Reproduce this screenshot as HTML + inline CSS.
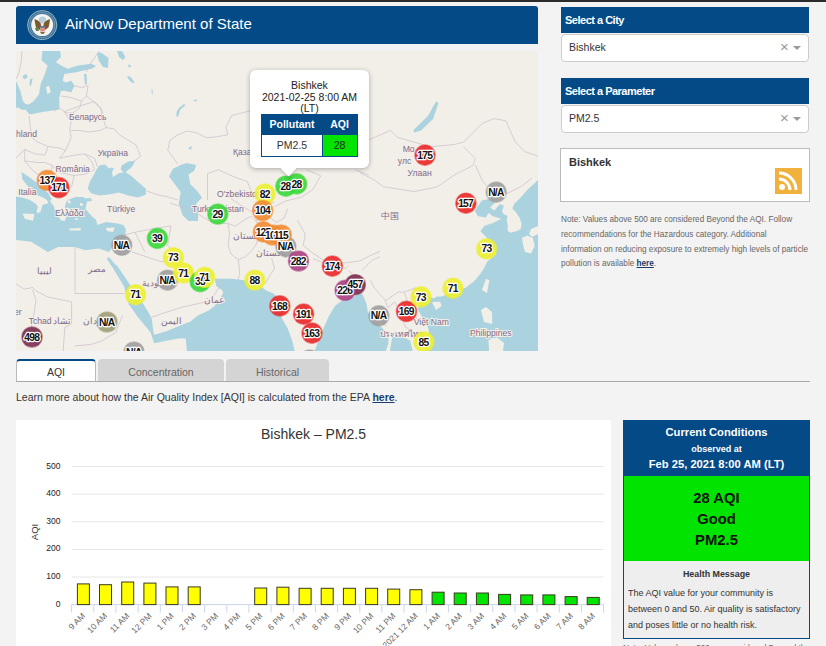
<!DOCTYPE html>
<html><head><meta charset="utf-8">
<style>
*{box-sizing:border-box;margin:0;padding:0}
html,body{width:826px;height:646px;overflow:hidden;background:#f3f3f3;font-family:"Liberation Sans",sans-serif;color:#333}
.abs{position:absolute}
</style></head><body>
<div class="abs" style="left:0;top:0;width:826px;height:2px;background:#2b2b2b"></div>
<!-- header -->
<div class="abs" style="left:16px;top:6px;width:522px;height:38px;background:#034a87;border-radius:3px 3px 0 0"></div>
<svg class="abs" style="left:27px;top:10px" width="31" height="31" viewBox="0 0 31 31">
<circle cx="15.2" cy="15.1" r="14.6" fill="#3f6f98" stroke="#8fb8bf" stroke-width="1"/>
<circle cx="15.2" cy="15.1" r="12.6" fill="none" stroke="#7aa3bd" stroke-width="0.8"/>
<circle cx="15.2" cy="15.1" r="11" fill="#f3f4f1"/>
<circle cx="15.5" cy="10" r="3.6" fill="#b9cfdc"/>
<path d="M7.5,9 L11,10.5 L13.5,13 L14.5,17 L12.5,20 L9,17.5 L8,13 Z" fill="#7b5b2c"/>
<path d="M23,9 L19.5,10.5 L17,13 L16,17 L18,20 L21.5,17.5 L22.5,13 Z" fill="#7b5b2c"/>
<path d="M8,18 L11,17 L12,21 L9,21 Z" fill="#5d8a4a"/>
<rect x="13.2" y="16" width="4.6" height="5.5" fill="#d98a8a"/>
<rect x="13.2" y="16" width="4.6" height="1.6" fill="#5a6fa0"/>
<path d="M13,22 L18,22 L16.5,24 L14.5,24 Z" fill="#8a6a3a"/>
</svg>
<div class="abs" style="left:65px;top:15px;font-size:15px;color:#fff;white-space:nowrap">AirNow Department of State</div>
<svg width="522" height="300" viewBox="16 51 522 300" style="position:absolute;left:16px;top:51px;display:block">
<rect x="16" y="51" width="522" height="300" fill="#f2efe9"/>
<polygon points="42.4,51 60.2,51 61,57 55.9,62 61,65.4 67.8,68.8 78,65.4 91.5,63.7 96,66 94.9,67.1 91.5,68.8 76.3,72.2 64.4,73.9 62.7,80.7 66.1,82.4 71.2,80.7 74.6,85.8 71.2,92.5 64.4,90.8 61,90.8 59.3,97.6 59.3,109.5 42.4,112 29.7,114.6 25.4,109.5 22,110 18.6,107.8 16,107.8 16,80.7 20.3,90.8 22.9,101 25.4,104 28.8,104.4 33.9,101 39,94.2 40.7,84.1 44.9,73.9 47.5,65.4 41.5,60.3" fill="#aad3df"/>
<polygon points="97,53 101,52.5 108.5,58 108,68 103,67 98.5,60" fill="#aad3df"/>
<polygon points="84,74 86.5,74 87,84 85,85" fill="#aad3df"/>
<polygon points="99.4,165.5 105.2,164.5 109,168.4 112,167.4 113.9,168.4 112,172.3 112.9,177.1 118.7,173.2 123.6,172.3 120.7,169.4 121.6,165.5 128.4,161.6 135.2,160.7 132.3,166.5 125.5,172.3 130.4,175.2 138.1,182 145.9,188.7 145.9,194.6 138.1,197.5 128.4,195.5 118.7,192.6 109,194.6 99.4,195.5 91.6,193.6 87.7,188.7 89.7,182 93.6,175.2 96.5,169.4" fill="#aad3df"/>
<polygon points="84,198.5 91,198 92,201 85,201.5" fill="#aad3df"/>
<polygon points="186.5,163 196.2,164.9 194.2,170.7 188.4,174.6 190.4,184.2 198.1,192 202,197.8 196.2,203.6 198.1,215.2 198.1,221 188.4,221 182.6,215.2 178.7,203.6 180.7,192 174.9,184.2 169,176.5 172.9,168.7 180.7,164.9" fill="#aad3df"/>
<polygon points="16,195 22.5,197 30,199 37,197.5 41,201 46.5,203.5 48.5,199 54,206.7 56.1,214.3 61.5,220.8 64.8,220.8 67,215.4 64.8,206.7 67,200.2 75.6,196.9 83.2,196.9 87.5,200.2 85.4,208.8 91.9,216.4 96,219.7 97.4,224.9 106,222 117.7,223.4 123.5,224.9 126,230 125,236 122.5,240 114,245.2 108.9,252 98.7,248.6 85.2,250.3 75,246.9 58,246.9 47.9,252 31,241.8 16,240" fill="#aad3df"/>
<polygon points="21.4,171.9 27.9,176.3 35.5,181.7 43.1,188.2 48.5,193.6 51.8,199.5 47,203 43.1,201.2 37.7,196.9 33.4,192.5 26.8,185 22.5,179.5" fill="#aad3df"/>
<polygon points="107.9,257.3 110,258 115,264.5 116.5,265 122.5,273.6 129,283.3 134.5,293 142.6,303 148.2,311.8 151.8,319 153,328.7 154.2,334.8 166.3,331.2 178.4,326.3 190.5,321.5 197.8,315.4 208.7,310.6 214.7,305.7 219.6,299.7 223.2,292.4 222.1,290.3 216.3,286 214.9,278.7 223.6,278.7 232.3,278.7 243.9,280.2 258.5,284.5 265.7,290.3 273,293.2 278.8,299 281.7,307.8 281.7,318 287.5,328.1 291.9,339.7 294.8,351 186.9,351 185.7,338.4 178.4,338.4 166.3,340.8 154.2,343.3 151.8,336 150.6,332.4 144.5,325.1 137.3,316.6 130,305.7 129,305 124,286.6 119,277.9 113,268.2 107,259" fill="#aad3df"/>
<polygon points="314.6,351 321.4,333 328.1,317.8 334.9,305.9 341.7,300.8 348.5,299.2 355.3,295.8 361.8,293.3 364.2,298.2 366.6,304.2 367.8,311.5 372,320 380,326 384.8,330.8 388.4,338.1 388.4,343 386,351" fill="#aad3df"/>
<polygon points="392,338 396.9,335.7 403,336.9 410.2,340.5 412.6,351 390,351" fill="#aad3df"/>
<polygon points="538,180 527.2,190 520.7,197.4 514.2,203.9 512.3,208.6 516,212.3 519.7,217.9 521.6,223.5 520.7,229 517,230.9 510.4,232.8 507.7,230.9 507.7,225.3 506.7,219.7 507.7,216 503.9,214.2 502,211.4 503.9,205.8 500,204 494.3,210.4 490,213 492,216 501.3,218.7 492.9,222.9 484.6,225.7 480.4,231.3 487.4,238.2 493,245.2 496.5,253.7 487.2,261.7 484,268.2 479.6,274.7 474.2,281.2 465.5,287.7 453,292 441.7,296.4 436.3,296.4 434.1,298.5 429.8,296.4 425,300 420,305 417.5,309 424.7,321.2 428.4,328.4 429.6,336.9 427,345 424.7,351 538,351" fill="#aad3df"/>
<polygon points="481.8,200.6 487.4,199.2 495.7,202 490.1,207.6 494.3,210.4 492,214 488,213.5 486,217.4 477.6,216 474.8,210.4" fill="#aad3df"/>
<path d="M117,51 L122,51 L125.4,57 L123,60 L119,57 Z" fill="#aad3df"/>
<path d="M436,101.5 L438.5,103 L433,119 L421,130.5 L414,132.5 L413.5,130 L428,116 Z" fill="#aad3df"/>
<path d="M22.5,76 L26,74 L28,77 L24,79.5 Z" fill="#aad3df"/>
<path d="M30,79 L32.7,78.6 L31,86 L29.5,85 Z" fill="#aad3df"/>
<path d="M188,148 L192,146 L191,150 Z" fill="#aad3df"/>
<path d="M127,76 L130,76.5 L133,80 L134.5,83 L132.5,83 L129,80 Z" fill="#aad3df"/>
<path d="M128,64.5 L130.5,65 L131,67.5 L128.5,67 Z" fill="#aad3df"/>
<path d="M184,104 L185.5,105 L180,110 L178.5,116 L176.5,117 L176.5,112 L179,108 Z" fill="#aad3df"/>
<path d="M193,100 L197,99.5 L196,102 Z" fill="#aad3df"/>
<path d="M151.5,89 L152.5,89 L152.8,94 L151.8,94 Z" fill="#aad3df"/>
<polygon points="22.5,213.5 34.4,214 33,220.7 25,219" fill="#f2efe9"/>
<polygon points="46,87 49,85.8 50.8,92 47.5,94.2" fill="#f2efe9"/>
<polygon points="28,194 36,195 42,197 47,200 48.5,203.5 45,204 42.5,205 41.5,208 41,211 38,213.5 36.5,211 38,207 36,204 30,200 22,197.5 16,196.5 16,194" fill="#f2efe9"/>
<polygon points="67,200 70,200.5 71,203 68.5,203.5" fill="#f2efe9"/>
<polygon points="66.5,207 70,209 71,211.5 67.5,210" fill="#f2efe9"/>
<polygon points="72,213 75,213.5 74,216 71.5,215" fill="#f2efe9"/>
<polygon points="77,209 80,210 79,212 76.5,211.5" fill="#f2efe9"/>
<polygon points="80,203 83,203.5 82.5,206 80,205.5" fill="#f2efe9"/>
<polygon points="75,218 78,218.5 77.5,220 75,219.8" fill="#f2efe9"/>
<polygon points="69.1,228.4 81,228 80.5,230.5 70,230.5" fill="#f2efe9"/>
<polygon points="106,228 114.8,227.5 113,232 107,231" fill="#f2efe9"/>
<polygon points="522,238 527,235.5 533,238 534.7,246 531,253.6 525,252 523,245" fill="#f2efe9"/>
<polygon points="538,226 531,229 529,234 532,236.9 538,234" fill="#f2efe9"/>
<polygon points="432,302 440,301.8 441.7,306 436,310" fill="#f2efe9"/>
<polygon points="486,279 489.4,280 487,293 482,290" fill="#f2efe9"/>
<polygon points="481,310 486,307 492,312 492.3,324 484,322" fill="#f2efe9"/>
<polygon points="488.5,340 497,337.5 504,343 503,351 489,351" fill="#f2efe9"/>
<g fill="none" stroke="#cdbfcc" stroke-width="0.75">
<path d="M29.1,116 L30.5,129 L33.4,139.2 L37.8,142.1 L48,146.5 L59.6,148 L65.4,150.8"/>
<path d="M64,111.6 L71.2,121.8 L69.8,129 L71.2,137.8 L65.4,150.8"/>
<path d="M64,111.6 L80,105.8 L94.5,101.5 L100.3,107.3 L103.2,118.9 L106.1,127.6 L100.3,130.5 L88.6,132 L80,130.5 L71.2,130.5"/>
<path d="M99.2,51 L88.1,67.1 L86.4,72.2"/>
<path d="M88.1,85.8 L86.4,96 L94.9,102.7 L101.7,109.5 L103.4,119.7"/>
<path d="M74.6,85.8 L81.4,87.5 L88.1,85.8"/>
<path d="M61,96 L71.2,97.6 L81.4,101 L86.4,96"/>
<path d="M81.4,101 L79.7,107.8 L72.9,112.9 L66.1,112.9 L59.3,107.8 L54.2,111.2"/>
<path d="M106.1,127.6 L114.8,129 L117.7,133.4 L126.4,139.2 L136,145 L140.7,156.2 L132.9,162"/>
<path d="M48,146.5 L45,155.2 L34.9,153.8 L24.7,149.4 L16,158.1"/>
<path d="M65.4,150.8 L59.6,158.1 L74.1,155.2 L84.3,153.8 L91.5,161 L94.5,169.7 L85.7,174.1 L74.1,175.5 L59.6,172.6 L52.3,165.4 L45,162.5 L37.8,162.5 L24.7,161 L24.7,149.4"/>
<path d="M84.3,153.8 L94.5,158.1 L97.4,166.8"/>
<path d="M24.7,161 L32,169.7 L40,176 L48,182"/>
<path d="M74.1,175.5 L72,185 L68,192 L60,196"/>
<path d="M52.3,165.4 L50,178 L55,188 L58,196"/>
<path d="M22,51 L21.2,62 L18.6,73.9 L16,79"/>
<path d="M177.5,163.9 L173.6,158.1 L167.8,150.4 L169.7,140.7 L177.5,134.9 L187.2,131 L196.9,132.9 L206.5,137.8 L216.2,136.8 L227.8,134.9 L225.9,127.1 L231.7,115.5 L247.2,111.6 L255,109.7"/>
<path d="M207.5,200 L207.5,173.6 L218.2,169.7 L235.6,177.5 L247.2,181.4 L251.1,191"/>
<path d="M146.5,191 L158.1,194.9 L167.8,196.9 L178,200"/>
<path d="M307.2,170 L320.7,175.8 L313,189.4 L301.4,197.1 L285.9,201 L274.2,206.8"/>
<path d="M252.9,193.2 L260.7,199 L274.2,203"/>
<path d="M199,214.7 L213.6,223.4 L228.1,223.4 L229.6,233.6 L228.1,245.2 L231,254 L238.3,259.7 L239.7,271.4 L238.3,280"/>
<path d="M228.1,223.4 L235.4,226.3 L245.5,219 L251.4,216.2 L255.7,220.5 L268.4,216.5 L276.2,222.3 L283.9,218.4 L287.8,208.7"/>
<path d="M255.7,220.5 L262,232 L258,240 L255.7,245.2 L251.4,251 L245.5,256.8 L238.3,259.7"/>
<path d="M231,198.7 L239.7,204.5 L251.4,211.8 L260.7,199"/>
<path d="M271.7,258.3 L274.6,268.5 L268.8,277.2 L265.4,283.9"/>
<path d="M170,203 L185,208 L199,214.7"/>
<path d="M297.5,220.4 L305.2,233.9 L303.3,245.5 L313,253.3 L324.6,261 L344,263 L359.5,261 L371.1,255.2 L380,251.4"/>
<path d="M355.6,170 L368.8,175"/>
<path d="M360,172.7 L374.1,179.8 L383.5,186.8 L414.1,191.5 L437.6,186.8 L454.1,175.1 L472.9,165.6 L475.3,158.6 L463.5,146.8"/>
<path d="M368.8,139.8 L390.6,130.4 L397.6,137.4 L414.1,142.1 L430.6,146.8 L454.1,144.5 L463.5,142.1 L482.4,123.3 L494.1,118.6 L505.9,120.9 L515.3,142.1 L524.7,151.5 L538,156.2"/>
<path d="M475.3,165 L482,180 L490,190 L497,198 L510,192 L522,186 L532,178"/>
<path d="M121.9,235.6 L135,232.3 L151.3,229 L171,225.8"/>
<path d="M135,232.3 L144.8,251.9"/>
<path d="M131.7,251.9 L161.1,261.7 L177.5,261.7"/>
<path d="M171,225.8 L167.6,245.4 L180.7,258.5"/>
<path d="M75,247 L75,293.5 L124.2,293.5"/>
<path d="M47.9,297 L71.6,301.9 L71.6,323.9 L64.8,327.3 L63.2,351"/>
<path d="M14,282.5 L24.2,289.2 L32.6,287.5 L36,291 L47.9,297"/>
<path d="M32.6,290 L36,300.2 L32.6,322.2 L27.6,340.8"/>
<path d="M151.3,317.3 L180.7,307.5 L210.1,301 L223.2,281.3"/>
<path d="M122.5,315.4 L115.7,332.4 L102.1,340.8 L92,344.2 L75,346"/>
<path d="M312.9,258.5 L324.7,263.6 L345.1,268.6 L348.5,265.3"/>
<path d="M348.5,270.3 L358.6,280.5 L362,292.4"/>
<path d="M362,270.3 L372.2,260.2 L380,256.8"/>
<path d="M370.3,280 L373.9,287.3 L380,294.5 L386,300.6 L390.8,297 L398.1,292.1 L404.2,292.1 L407.8,301.8 L412.6,311.5 L418.7,321.2 L424.7,327.2"/>
<path d="M384.8,300.6 L388.4,307.8 L394.5,301.8 L398.1,307.8 L405.4,327.2 L412.6,330.8"/>
<path d="M380,318.7 L386,326"/>
<path d="M404.2,292.1 L415,288 L425,290"/>
</g>
<g font-family="Liberation Sans" font-size="8.6" letter-spacing="0" fill="#806a88">
<text x="69" y="120" stroke="#f2efe9" stroke-width="2" paint-order="stroke">Беларусь</text>
<text x="16" y="137" stroke="#f2efe9" stroke-width="2" paint-order="stroke">hland</text>
<text x="97.8" y="156" stroke="#f2efe9" stroke-width="2" paint-order="stroke">Україна</text>
<text x="55.5" y="171.5" stroke="#f2efe9" stroke-width="2" paint-order="stroke">România</text>
<text x="18.3" y="195" stroke="#f2efe9" stroke-width="2" paint-order="stroke">Italia</text>
<text x="54.9" y="215.5" stroke="#f2efe9" stroke-width="2" paint-order="stroke">Ελλάδα</text>
<text x="107" y="212" stroke="#f2efe9" stroke-width="2" paint-order="stroke">Türkiye</text>
<text x="233" y="155" stroke="#f2efe9" stroke-width="2" paint-order="stroke">Қаза</text>
<text x="217" y="197" stroke="#f2efe9" stroke-width="2" paint-order="stroke">O'zbekiston</text>
<text x="192" y="212" stroke="#f2efe9" stroke-width="2" paint-order="stroke">Turkmenistan</text>
<text x="380.5" y="219" stroke="#f2efe9" stroke-width="2" paint-order="stroke">中国</text>
<text x="402.7" y="151.6" stroke="#f2efe9" stroke-width="2" paint-order="stroke">Mo</text>
<text x="397.8" y="164" stroke="#f2efe9" stroke-width="2" paint-order="stroke">улс</text>
<text x="407.5" y="175.8" stroke="#f2efe9" stroke-width="2" paint-order="stroke">Улаан</text>
<text x="36.9" y="274" stroke="#f2efe9" stroke-width="2" paint-order="stroke">ليبيا</text>
<text x="87.5" y="272" stroke="#f2efe9" stroke-width="2" paint-order="stroke">مصر</text>
<text x="141.5" y="286" stroke="#f2efe9" stroke-width="2" paint-order="stroke">السعودية</text>
<text x="233" y="239" stroke="#f2efe9" stroke-width="2" paint-order="stroke">افغانستان</text>
<text x="256" y="256" stroke="#f2efe9" stroke-width="2" paint-order="stroke">پاکستان</text>
<text x="203.6" y="303" stroke="#f2efe9" stroke-width="2" paint-order="stroke">عمان</text>
<text x="161" y="324" stroke="#f2efe9" stroke-width="2" paint-order="stroke">اليمن</text>
<text x="82.6" y="324" stroke="#f2efe9" stroke-width="2" paint-order="stroke">السودان</text>
<text x="28.7" y="324" stroke="#f2efe9" stroke-width="2" paint-order="stroke">Tchad</text>
<text x="53" y="324" stroke="#f2efe9" stroke-width="2" paint-order="stroke">تشاد</text>
<text x="14" y="315" stroke="#f2efe9" stroke-width="2" paint-order="stroke">er</text>
<text x="413.8" y="325" stroke="#f2efe9" stroke-width="2" paint-order="stroke">Việt Nam</text>
<text x="379.5" y="337" stroke="#f2efe9" stroke-width="2" paint-order="stroke">ประเทศไทย</text>
<text x="470" y="336" stroke="#f2efe9" stroke-width="2" paint-order="stroke">Philippines</text>
</g>
<circle cx="496.2" cy="192.1" r="10.1" fill="#a0a0a0" fill-opacity="0.92" stroke="#a0a0a0" stroke-opacity="0.5" stroke-width="1.4"/>
<circle cx="121.8" cy="245.3" r="10.1" fill="#a0a0a0" fill-opacity="0.92" stroke="#a0a0a0" stroke-opacity="0.5" stroke-width="1.4"/>
<circle cx="285.9" cy="246.6" r="10.1" fill="#a0a0a0" fill-opacity="0.92" stroke="#a0a0a0" stroke-opacity="0.5" stroke-width="1.4"/>
<circle cx="167.6" cy="280.2" r="10.1" fill="#a0a0a0" fill-opacity="0.92" stroke="#a0a0a0" stroke-opacity="0.5" stroke-width="1.4"/>
<circle cx="378.9" cy="315.8" r="10.1" fill="#a0a0a0" fill-opacity="0.92" stroke="#a0a0a0" stroke-opacity="0.5" stroke-width="1.4"/>
<circle cx="107" cy="322" r="10.1" fill="#a0a078" fill-opacity="0.92" stroke="#a0a078" stroke-opacity="0.5" stroke-width="1.4"/>
<circle cx="134" cy="352" r="10.1" fill="#a0a0a0" fill-opacity="0.92" stroke="#a0a0a0" stroke-opacity="0.5" stroke-width="1.4"/>
<circle cx="309.5" cy="360" r="10.1" fill="#a0a0a0" fill-opacity="0.92" stroke="#a0a0a0" stroke-opacity="0.5" stroke-width="1.4"/>
<circle cx="47.2" cy="180.3" r="10.1" fill="#f28c32" fill-opacity="0.92" stroke="#f28c32" stroke-opacity="0.5" stroke-width="1.4"/>
<circle cx="58.9" cy="187.6" r="10.1" fill="#ea2a2a" fill-opacity="0.92" stroke="#ea2a2a" stroke-opacity="0.5" stroke-width="1.4"/>
<circle cx="425" cy="155.1" r="10.1" fill="#ea2a2a" fill-opacity="0.92" stroke="#ea2a2a" stroke-opacity="0.5" stroke-width="1.4"/>
<circle cx="465.9" cy="203.2" r="10.1" fill="#ea2a2a" fill-opacity="0.92" stroke="#ea2a2a" stroke-opacity="0.5" stroke-width="1.4"/>
<circle cx="217.8" cy="214.1" r="10.1" fill="#3cd83c" fill-opacity="0.92" stroke="#3cd83c" stroke-opacity="0.5" stroke-width="1.4"/>
<circle cx="265" cy="194" r="10.1" fill="#eef032" fill-opacity="0.92" stroke="#eef032" stroke-opacity="0.5" stroke-width="1.4"/>
<circle cx="262.7" cy="210.5" r="10.1" fill="#f28c32" fill-opacity="0.92" stroke="#f28c32" stroke-opacity="0.5" stroke-width="1.4"/>
<circle cx="285.9" cy="186.2" r="10.1" fill="#3cd83c" fill-opacity="0.92" stroke="#3cd83c" stroke-opacity="0.5" stroke-width="1.4"/>
<circle cx="296.7" cy="183.9" r="10.1" fill="#3cd83c" fill-opacity="0.92" stroke="#3cd83c" stroke-opacity="0.5" stroke-width="1.4"/>
<circle cx="157.4" cy="238.4" r="10.1" fill="#3cd83c" fill-opacity="0.92" stroke="#3cd83c" stroke-opacity="0.5" stroke-width="1.4"/>
<circle cx="263.4" cy="231.9" r="10.1" fill="#f28c32" fill-opacity="0.92" stroke="#f28c32" stroke-opacity="0.5" stroke-width="1.4"/>
<circle cx="272.7" cy="235" r="10.1" fill="#f28c32" fill-opacity="0.92" stroke="#f28c32" stroke-opacity="0.5" stroke-width="1.4"/>
<circle cx="281.2" cy="235" r="10.1" fill="#f28c32" fill-opacity="0.92" stroke="#f28c32" stroke-opacity="0.5" stroke-width="1.4"/>
<circle cx="486.7" cy="248.8" r="10.1" fill="#eef032" fill-opacity="0.92" stroke="#eef032" stroke-opacity="0.5" stroke-width="1.4"/>
<circle cx="173.4" cy="257.7" r="10.1" fill="#eef032" fill-opacity="0.92" stroke="#eef032" stroke-opacity="0.5" stroke-width="1.4"/>
<circle cx="183.5" cy="273" r="10.1" fill="#eef032" fill-opacity="0.92" stroke="#eef032" stroke-opacity="0.5" stroke-width="1.4"/>
<circle cx="200.2" cy="281.7" r="10.1" fill="#3cd83c" fill-opacity="0.92" stroke="#3cd83c" stroke-opacity="0.5" stroke-width="1.4"/>
<circle cx="204.6" cy="277.3" r="10.1" fill="#eef032" fill-opacity="0.92" stroke="#eef032" stroke-opacity="0.5" stroke-width="1.4"/>
<circle cx="254.9" cy="280.2" r="10.1" fill="#eef032" fill-opacity="0.92" stroke="#eef032" stroke-opacity="0.5" stroke-width="1.4"/>
<circle cx="298.5" cy="261" r="10.1" fill="#ad4283" fill-opacity="0.92" stroke="#ad4283" stroke-opacity="0.5" stroke-width="1.4"/>
<circle cx="332.4" cy="266.1" r="10.1" fill="#ea2a2a" fill-opacity="0.92" stroke="#ea2a2a" stroke-opacity="0.5" stroke-width="1.4"/>
<circle cx="355.3" cy="284.7" r="10.1" fill="#7e3050" fill-opacity="0.92" stroke="#7e3050" stroke-opacity="0.5" stroke-width="1.4"/>
<circle cx="345.1" cy="290.3" r="10.1" fill="#ad4283" fill-opacity="0.92" stroke="#ad4283" stroke-opacity="0.5" stroke-width="1.4"/>
<circle cx="135.6" cy="294.7" r="10.1" fill="#eef032" fill-opacity="0.92" stroke="#eef032" stroke-opacity="0.5" stroke-width="1.4"/>
<circle cx="279.8" cy="305.9" r="10.1" fill="#ea2a2a" fill-opacity="0.92" stroke="#ea2a2a" stroke-opacity="0.5" stroke-width="1.4"/>
<circle cx="303.6" cy="314.1" r="10.1" fill="#ea2a2a" fill-opacity="0.92" stroke="#ea2a2a" stroke-opacity="0.5" stroke-width="1.4"/>
<circle cx="312" cy="333.1" r="10.1" fill="#ea2a2a" fill-opacity="0.92" stroke="#ea2a2a" stroke-opacity="0.5" stroke-width="1.4"/>
<circle cx="406.5" cy="311.4" r="10.1" fill="#ea2a2a" fill-opacity="0.92" stroke="#ea2a2a" stroke-opacity="0.5" stroke-width="1.4"/>
<circle cx="421" cy="296.9" r="10.1" fill="#eef032" fill-opacity="0.92" stroke="#eef032" stroke-opacity="0.5" stroke-width="1.4"/>
<circle cx="453" cy="288.2" r="10.1" fill="#eef032" fill-opacity="0.92" stroke="#eef032" stroke-opacity="0.5" stroke-width="1.4"/>
<circle cx="423.9" cy="341.9" r="10.1" fill="#eef032" fill-opacity="0.92" stroke="#eef032" stroke-opacity="0.5" stroke-width="1.4"/>
<circle cx="32" cy="337" r="10.1" fill="#7e3050" fill-opacity="0.92" stroke="#7e3050" stroke-opacity="0.5" stroke-width="1.4"/>
<text x="46.900000000000006" y="183.9" text-anchor="middle" font-family="Liberation Sans" font-weight="bold" font-size="10.3" letter-spacing="-0.75" fill="#111" stroke="#fff" stroke-width="2.5" paint-order="stroke" stroke-linejoin="round">137</text>
<text x="58.6" y="191.2" text-anchor="middle" font-family="Liberation Sans" font-weight="bold" font-size="10.3" letter-spacing="-0.75" fill="#111" stroke="#fff" stroke-width="2.5" paint-order="stroke" stroke-linejoin="round">171</text>
<text x="424.7" y="158.7" text-anchor="middle" font-family="Liberation Sans" font-weight="bold" font-size="10.3" letter-spacing="-0.75" fill="#111" stroke="#fff" stroke-width="2.5" paint-order="stroke" stroke-linejoin="round">175</text>
<text x="465.59999999999997" y="206.79999999999998" text-anchor="middle" font-family="Liberation Sans" font-weight="bold" font-size="10.3" letter-spacing="-0.75" fill="#111" stroke="#fff" stroke-width="2.5" paint-order="stroke" stroke-linejoin="round">157</text>
<text x="495.9" y="195.7" text-anchor="middle" font-family="Liberation Sans" font-weight="bold" font-size="10.3" letter-spacing="-0.75" fill="#111" stroke="#fff" stroke-width="2.5" paint-order="stroke" stroke-linejoin="round">N/A</text>
<text x="217.5" y="217.7" text-anchor="middle" font-family="Liberation Sans" font-weight="bold" font-size="10.3" letter-spacing="-0.75" fill="#111" stroke="#fff" stroke-width="2.5" paint-order="stroke" stroke-linejoin="round">29</text>
<text x="264.7" y="197.6" text-anchor="middle" font-family="Liberation Sans" font-weight="bold" font-size="10.3" letter-spacing="-0.75" fill="#111" stroke="#fff" stroke-width="2.5" paint-order="stroke" stroke-linejoin="round">82</text>
<text x="262.4" y="214.1" text-anchor="middle" font-family="Liberation Sans" font-weight="bold" font-size="10.3" letter-spacing="-0.75" fill="#111" stroke="#fff" stroke-width="2.5" paint-order="stroke" stroke-linejoin="round">104</text>
<text x="285.59999999999997" y="189.79999999999998" text-anchor="middle" font-family="Liberation Sans" font-weight="bold" font-size="10.3" letter-spacing="-0.75" fill="#111" stroke="#fff" stroke-width="2.5" paint-order="stroke" stroke-linejoin="round">28</text>
<text x="296.4" y="187.5" text-anchor="middle" font-family="Liberation Sans" font-weight="bold" font-size="10.3" letter-spacing="-0.75" fill="#111" stroke="#fff" stroke-width="2.5" paint-order="stroke" stroke-linejoin="round">28</text>
<text x="157.1" y="242.0" text-anchor="middle" font-family="Liberation Sans" font-weight="bold" font-size="10.3" letter-spacing="-0.75" fill="#111" stroke="#fff" stroke-width="2.5" paint-order="stroke" stroke-linejoin="round">39</text>
<text x="121.5" y="248.9" text-anchor="middle" font-family="Liberation Sans" font-weight="bold" font-size="10.3" letter-spacing="-0.75" fill="#111" stroke="#fff" stroke-width="2.5" paint-order="stroke" stroke-linejoin="round">N/A</text>
<text x="263.09999999999997" y="235.5" text-anchor="middle" font-family="Liberation Sans" font-weight="bold" font-size="10.3" letter-spacing="-0.75" fill="#111" stroke="#fff" stroke-width="2.5" paint-order="stroke" stroke-linejoin="round">125</text>
<text x="272.4" y="238.6" text-anchor="middle" font-family="Liberation Sans" font-weight="bold" font-size="10.3" letter-spacing="-0.75" fill="#111" stroke="#fff" stroke-width="2.5" paint-order="stroke" stroke-linejoin="round">101</text>
<text x="280.9" y="238.6" text-anchor="middle" font-family="Liberation Sans" font-weight="bold" font-size="10.3" letter-spacing="-0.75" fill="#111" stroke="#fff" stroke-width="2.5" paint-order="stroke" stroke-linejoin="round">115</text>
<text x="285.59999999999997" y="250.2" text-anchor="middle" font-family="Liberation Sans" font-weight="bold" font-size="10.3" letter-spacing="-0.75" fill="#111" stroke="#fff" stroke-width="2.5" paint-order="stroke" stroke-linejoin="round">N/A</text>
<text x="486.4" y="252.4" text-anchor="middle" font-family="Liberation Sans" font-weight="bold" font-size="10.3" letter-spacing="-0.75" fill="#111" stroke="#fff" stroke-width="2.5" paint-order="stroke" stroke-linejoin="round">73</text>
<text x="173.1" y="261.3" text-anchor="middle" font-family="Liberation Sans" font-weight="bold" font-size="10.3" letter-spacing="-0.75" fill="#111" stroke="#fff" stroke-width="2.5" paint-order="stroke" stroke-linejoin="round">73</text>
<text x="167.29999999999998" y="283.8" text-anchor="middle" font-family="Liberation Sans" font-weight="bold" font-size="10.3" letter-spacing="-0.75" fill="#111" stroke="#fff" stroke-width="2.5" paint-order="stroke" stroke-linejoin="round">N/A</text>
<text x="183.2" y="276.6" text-anchor="middle" font-family="Liberation Sans" font-weight="bold" font-size="10.3" letter-spacing="-0.75" fill="#111" stroke="#fff" stroke-width="2.5" paint-order="stroke" stroke-linejoin="round">71</text>
<text x="199.89999999999998" y="285.3" text-anchor="middle" font-family="Liberation Sans" font-weight="bold" font-size="10.3" letter-spacing="-0.75" fill="#111" stroke="#fff" stroke-width="2.5" paint-order="stroke" stroke-linejoin="round">38</text>
<text x="204.29999999999998" y="280.90000000000003" text-anchor="middle" font-family="Liberation Sans" font-weight="bold" font-size="10.3" letter-spacing="-0.75" fill="#111" stroke="#fff" stroke-width="2.5" paint-order="stroke" stroke-linejoin="round">71</text>
<text x="254.6" y="283.8" text-anchor="middle" font-family="Liberation Sans" font-weight="bold" font-size="10.3" letter-spacing="-0.75" fill="#111" stroke="#fff" stroke-width="2.5" paint-order="stroke" stroke-linejoin="round">88</text>
<text x="298.2" y="264.6" text-anchor="middle" font-family="Liberation Sans" font-weight="bold" font-size="10.3" letter-spacing="-0.75" fill="#111" stroke="#fff" stroke-width="2.5" paint-order="stroke" stroke-linejoin="round">282</text>
<text x="332.09999999999997" y="269.70000000000005" text-anchor="middle" font-family="Liberation Sans" font-weight="bold" font-size="10.3" letter-spacing="-0.75" fill="#111" stroke="#fff" stroke-width="2.5" paint-order="stroke" stroke-linejoin="round">174</text>
<text x="344.8" y="293.90000000000003" text-anchor="middle" font-family="Liberation Sans" font-weight="bold" font-size="10.3" letter-spacing="-0.75" fill="#111" stroke="#fff" stroke-width="2.5" paint-order="stroke" stroke-linejoin="round">226</text>
<text x="355.0" y="288.3" text-anchor="middle" font-family="Liberation Sans" font-weight="bold" font-size="10.3" letter-spacing="-0.75" fill="#111" stroke="#fff" stroke-width="2.5" paint-order="stroke" stroke-linejoin="round">457</text>
<text x="135.29999999999998" y="298.3" text-anchor="middle" font-family="Liberation Sans" font-weight="bold" font-size="10.3" letter-spacing="-0.75" fill="#111" stroke="#fff" stroke-width="2.5" paint-order="stroke" stroke-linejoin="round">71</text>
<text x="279.5" y="309.5" text-anchor="middle" font-family="Liberation Sans" font-weight="bold" font-size="10.3" letter-spacing="-0.75" fill="#111" stroke="#fff" stroke-width="2.5" paint-order="stroke" stroke-linejoin="round">168</text>
<text x="303.3" y="317.70000000000005" text-anchor="middle" font-family="Liberation Sans" font-weight="bold" font-size="10.3" letter-spacing="-0.75" fill="#111" stroke="#fff" stroke-width="2.5" paint-order="stroke" stroke-linejoin="round">191</text>
<text x="311.7" y="336.70000000000005" text-anchor="middle" font-family="Liberation Sans" font-weight="bold" font-size="10.3" letter-spacing="-0.75" fill="#111" stroke="#fff" stroke-width="2.5" paint-order="stroke" stroke-linejoin="round">163</text>
<text x="378.59999999999997" y="319.40000000000003" text-anchor="middle" font-family="Liberation Sans" font-weight="bold" font-size="10.3" letter-spacing="-0.75" fill="#111" stroke="#fff" stroke-width="2.5" paint-order="stroke" stroke-linejoin="round">N/A</text>
<text x="406.2" y="315.0" text-anchor="middle" font-family="Liberation Sans" font-weight="bold" font-size="10.3" letter-spacing="-0.75" fill="#111" stroke="#fff" stroke-width="2.5" paint-order="stroke" stroke-linejoin="round">169</text>
<text x="420.7" y="300.5" text-anchor="middle" font-family="Liberation Sans" font-weight="bold" font-size="10.3" letter-spacing="-0.75" fill="#111" stroke="#fff" stroke-width="2.5" paint-order="stroke" stroke-linejoin="round">73</text>
<text x="452.7" y="291.8" text-anchor="middle" font-family="Liberation Sans" font-weight="bold" font-size="10.3" letter-spacing="-0.75" fill="#111" stroke="#fff" stroke-width="2.5" paint-order="stroke" stroke-linejoin="round">71</text>
<text x="423.59999999999997" y="345.5" text-anchor="middle" font-family="Liberation Sans" font-weight="bold" font-size="10.3" letter-spacing="-0.75" fill="#111" stroke="#fff" stroke-width="2.5" paint-order="stroke" stroke-linejoin="round">85</text>
<text x="106.7" y="325.6" text-anchor="middle" font-family="Liberation Sans" font-weight="bold" font-size="10.3" letter-spacing="-0.75" fill="#111" stroke="#fff" stroke-width="2.5" paint-order="stroke" stroke-linejoin="round">N/A</text>
<text x="31.7" y="340.6" text-anchor="middle" font-family="Liberation Sans" font-weight="bold" font-size="10.3" letter-spacing="-0.75" fill="#111" stroke="#fff" stroke-width="2.5" paint-order="stroke" stroke-linejoin="round">498</text>
<text x="133.7" y="355.6" text-anchor="middle" font-family="Liberation Sans" font-weight="bold" font-size="10.3" letter-spacing="-0.75" fill="#111" stroke="#fff" stroke-width="2.5" paint-order="stroke" stroke-linejoin="round">N/A</text>
<text x="309.2" y="363.6" text-anchor="middle" font-family="Liberation Sans" font-weight="bold" font-size="10.3" letter-spacing="-0.75" fill="#111" stroke="#fff" stroke-width="2.5" paint-order="stroke" stroke-linejoin="round">N/A</text>
</svg>
<!-- popup -->
<div class="abs" style="left:250px;top:70px;width:119px;height:98px;background:#fff;border-radius:6px;box-shadow:0 1px 5px rgba(0,0,0,.3)"></div>
<div class="abs" style="left:283px;top:163px;width:11px;height:11px;background:#fff;transform:rotate(45deg);box-shadow:2px 2px 3px rgba(0,0,0,.15)"></div>
<div class="abs" style="left:250px;top:80px;width:119px;text-align:center;font-size:10.5px;line-height:11.5px;color:#222">Bishkek<br>2021-02-25 8:00 AM<br>(LT)</div>
<div class="abs" style="left:261px;top:114px;width:97px;height:43px;border:1px solid #034a87;background:#fff">
 <div class="abs" style="left:0;top:0;width:95px;height:20px;background:#034a87"></div>
 <div class="abs" style="left:0;top:3px;width:60px;text-align:center;font-size:10.5px;font-weight:bold;color:#fff">Pollutant</div>
 <div class="abs" style="left:60px;top:3px;width:35px;text-align:center;font-size:10.5px;font-weight:bold;color:#fff">AQI</div>
 <div class="abs" style="left:60px;top:20px;width:35px;height:21px;background:#00e400;border-left:1px solid #034a87"></div>
 <div class="abs" style="left:0;top:24px;width:60px;text-align:center;font-size:10.5px;color:#333">PM2.5</div>
 <div class="abs" style="left:60px;top:24px;width:35px;text-align:center;font-size:10.5px;color:#222">28</div>
</div>
<!-- right panel -->
<div class="abs" style="left:561px;top:7px;width:248px;height:26px;background:#034a87"></div>
<div class="abs" style="left:565px;top:14px;font-size:11px;font-weight:bold;color:#fff;letter-spacing:-0.5px">Select a City</div>
<div class="abs" style="left:561px;top:34px;width:248px;height:28px;background:#fff;border:1px solid #ccc;border-radius:4px"></div>
<div class="abs" style="left:569px;top:41px;font-size:10.5px;color:#333">Bishkek</div>
<div class="abs" style="left:780px;top:38px;font-size:15px;color:#999">&#215;</div>
<div class="abs" style="left:793px;top:46px;width:0;height:0;border-left:4px solid transparent;border-right:4px solid transparent;border-top:4px solid #999"></div>
<div class="abs" style="left:561px;top:78px;width:248px;height:26px;background:#034a87"></div>
<div class="abs" style="left:565px;top:85px;font-size:11px;font-weight:bold;color:#fff;letter-spacing:-0.5px">Select a Parameter</div>
<div class="abs" style="left:561px;top:105px;width:248px;height:28px;background:#fff;border:1px solid #ccc;border-radius:4px"></div>
<div class="abs" style="left:569px;top:112px;font-size:10.5px;color:#333">PM2.5</div>
<div class="abs" style="left:780px;top:109px;font-size:15px;color:#999">&#215;</div>
<div class="abs" style="left:793px;top:117px;width:0;height:0;border-left:4px solid transparent;border-right:4px solid transparent;border-top:4px solid #999"></div>
<div class="abs" style="left:560px;top:148px;width:250px;height:54px;background:#fff;border:1px solid #bbb"></div>
<div class="abs" style="left:569px;top:156px;font-size:11px;font-weight:bold;color:#333">Bishkek</div>
<svg class="abs" style="left:775px;top:168px" width="27" height="26" viewBox="0 0 27 26">
<rect width="27" height="26" fill="#f0b23c"/>
<circle cx="7" cy="19" r="3" fill="#fff"/>
<path d="M4,11 A11,11 0 0 1 15,22" stroke="#fff" stroke-width="3" fill="none"/>
<path d="M4,5 A17,17 0 0 1 21,22" stroke="#fff" stroke-width="3" fill="none"/>
</svg>
<div class="abs" style="left:561px;top:213px;width:260px;white-space:nowrap;font-size:8.2px;line-height:14.8px;color:#666">Note: Values above 500 are considered Beyond the AQI. Follow<br>recommendations for the Hazardous category. Additional<br>information on reducing exposure to extremely high levels of particle<br>pollution is available <b style="color:#1a3d6e;text-decoration:underline">here</b>.</div>
<!-- tabs -->
<div class="abs" style="left:16px;top:359px;width:80px;height:23px;background:#fff;border:1px solid #bbb;border-top:2px solid #034a87;border-bottom:none;border-radius:4px 4px 0 0"></div>
<div class="abs" style="left:16px;top:366px;width:80px;text-align:center;font-size:10.5px;color:#333">AQI</div>
<div class="abs" style="left:98px;top:359px;width:126px;height:22px;background:#d4d4d4;border-radius:4px 4px 0 0"></div>
<div class="abs" style="left:98px;top:366px;width:126px;text-align:center;font-size:10.5px;color:#666">Concentration</div>
<div class="abs" style="left:226px;top:359px;width:103px;height:22px;background:#d4d4d4;border-radius:4px 4px 0 0"></div>
<div class="abs" style="left:226px;top:366px;width:103px;text-align:center;font-size:10.5px;color:#666">Historical</div>
<div class="abs" style="left:16px;top:381px;width:794px;height:1px;background:#aaa"></div>
<div class="abs" style="left:16px;top:391px;font-size:10.5px;color:#333;white-space:nowrap">Learn more about how the Air Quality Index [AQI] is calculated from the EPA <b style="color:#1a3d6e;text-decoration:underline">here</b>.</div>
<svg width="595" height="226" viewBox="16 420 595 226" style="position:absolute;left:16px;top:420px;display:block">
<rect x="16" y="420" width="595" height="226" fill="#fff"/>
<text x="313.5" y="438.6" text-anchor="middle" font-family="Liberation Sans" font-size="14" fill="#333">Bishkek – PM2.5</text>
<line x1="71.6" x2="603.6" y1="466.6" y2="466.6" stroke="#e6e6e6" stroke-width="1"/>
<line x1="71.6" x2="603.6" y1="494.2" y2="494.2" stroke="#e6e6e6" stroke-width="1"/>
<line x1="71.6" x2="603.6" y1="521.8" y2="521.8" stroke="#e6e6e6" stroke-width="1"/>
<line x1="71.6" x2="603.6" y1="549.4" y2="549.4" stroke="#e6e6e6" stroke-width="1"/>
<line x1="71.6" x2="603.6" y1="577.0" y2="577.0" stroke="#e6e6e6" stroke-width="1"/>
<text x="60.5" y="468.6" text-anchor="end" font-family="Liberation Sans" font-size="8.5" fill="#222">500</text>
<text x="60.5" y="496.2" text-anchor="end" font-family="Liberation Sans" font-size="8.5" fill="#222">400</text>
<text x="60.5" y="523.8" text-anchor="end" font-family="Liberation Sans" font-size="8.5" fill="#222">300</text>
<text x="60.5" y="551.4" text-anchor="end" font-family="Liberation Sans" font-size="8.5" fill="#222">200</text>
<text x="60.5" y="579.0" text-anchor="end" font-family="Liberation Sans" font-size="8.5" fill="#222">100</text>
<text x="60.5" y="606.6" text-anchor="end" font-family="Liberation Sans" font-size="8.5" fill="#222">0</text>
<text transform="translate(37.5,532) rotate(-90)" text-anchor="middle" font-family="Liberation Sans" font-size="9.5" fill="#333">AQI</text>
<line x1="71.6" x2="603.6" y1="604.6" y2="604.6" stroke="#ccd6eb" stroke-width="1"/>
<line x1="71.6" x2="71.6" y1="604.6" y2="612.6" stroke="#ccd6eb" stroke-width="1"/>
<line x1="93.8" x2="93.8" y1="604.6" y2="612.6" stroke="#ccd6eb" stroke-width="1"/>
<line x1="115.9" x2="115.9" y1="604.6" y2="612.6" stroke="#ccd6eb" stroke-width="1"/>
<line x1="138.1" x2="138.1" y1="604.6" y2="612.6" stroke="#ccd6eb" stroke-width="1"/>
<line x1="160.3" x2="160.3" y1="604.6" y2="612.6" stroke="#ccd6eb" stroke-width="1"/>
<line x1="182.4" x2="182.4" y1="604.6" y2="612.6" stroke="#ccd6eb" stroke-width="1"/>
<line x1="204.6" x2="204.6" y1="604.6" y2="612.6" stroke="#ccd6eb" stroke-width="1"/>
<line x1="226.8" x2="226.8" y1="604.6" y2="612.6" stroke="#ccd6eb" stroke-width="1"/>
<line x1="248.9" x2="248.9" y1="604.6" y2="612.6" stroke="#ccd6eb" stroke-width="1"/>
<line x1="271.1" x2="271.1" y1="604.6" y2="612.6" stroke="#ccd6eb" stroke-width="1"/>
<line x1="293.3" x2="293.3" y1="604.6" y2="612.6" stroke="#ccd6eb" stroke-width="1"/>
<line x1="315.4" x2="315.4" y1="604.6" y2="612.6" stroke="#ccd6eb" stroke-width="1"/>
<line x1="337.6" x2="337.6" y1="604.6" y2="612.6" stroke="#ccd6eb" stroke-width="1"/>
<line x1="359.8" x2="359.8" y1="604.6" y2="612.6" stroke="#ccd6eb" stroke-width="1"/>
<line x1="381.9" x2="381.9" y1="604.6" y2="612.6" stroke="#ccd6eb" stroke-width="1"/>
<line x1="404.1" x2="404.1" y1="604.6" y2="612.6" stroke="#ccd6eb" stroke-width="1"/>
<line x1="426.3" x2="426.3" y1="604.6" y2="612.6" stroke="#ccd6eb" stroke-width="1"/>
<line x1="448.4" x2="448.4" y1="604.6" y2="612.6" stroke="#ccd6eb" stroke-width="1"/>
<line x1="470.6" x2="470.6" y1="604.6" y2="612.6" stroke="#ccd6eb" stroke-width="1"/>
<line x1="492.8" x2="492.8" y1="604.6" y2="612.6" stroke="#ccd6eb" stroke-width="1"/>
<line x1="514.9" x2="514.9" y1="604.6" y2="612.6" stroke="#ccd6eb" stroke-width="1"/>
<line x1="537.1" x2="537.1" y1="604.6" y2="612.6" stroke="#ccd6eb" stroke-width="1"/>
<line x1="559.3" x2="559.3" y1="604.6" y2="612.6" stroke="#ccd6eb" stroke-width="1"/>
<line x1="581.4" x2="581.4" y1="604.6" y2="612.6" stroke="#ccd6eb" stroke-width="1"/>
<line x1="603.6" x2="603.6" y1="604.6" y2="612.6" stroke="#ccd6eb" stroke-width="1"/>
<rect x="77.4" y="583.9" width="12" height="20.7" fill="#ffff00" stroke="#3a3a22" stroke-width="1"/>
<text transform="translate(85.7,616.6) rotate(-45)" text-anchor="end" font-family="Liberation Sans" font-size="8.5" fill="#666">9 AM</text>
<rect x="99.5" y="584.7" width="12" height="19.9" fill="#ffff00" stroke="#3a3a22" stroke-width="1"/>
<text transform="translate(107.8,616.6) rotate(-45)" text-anchor="end" font-family="Liberation Sans" font-size="8.5" fill="#666">10 AM</text>
<rect x="121.7" y="582.0" width="12" height="22.6" fill="#ffff00" stroke="#3a3a22" stroke-width="1"/>
<text transform="translate(130.0,616.6) rotate(-45)" text-anchor="end" font-family="Liberation Sans" font-size="8.5" fill="#666">11 AM</text>
<rect x="143.9" y="583.1" width="12" height="21.5" fill="#ffff00" stroke="#3a3a22" stroke-width="1"/>
<text transform="translate(152.2,616.6) rotate(-45)" text-anchor="end" font-family="Liberation Sans" font-size="8.5" fill="#666">12 PM</text>
<rect x="166.0" y="586.9" width="12" height="17.7" fill="#ffff00" stroke="#3a3a22" stroke-width="1"/>
<text transform="translate(174.3,616.6) rotate(-45)" text-anchor="end" font-family="Liberation Sans" font-size="8.5" fill="#666">1 PM</text>
<rect x="188.2" y="586.9" width="12" height="17.7" fill="#ffff00" stroke="#3a3a22" stroke-width="1"/>
<text transform="translate(196.5,616.6) rotate(-45)" text-anchor="end" font-family="Liberation Sans" font-size="8.5" fill="#666">2 PM</text>
<text transform="translate(218.7,616.6) rotate(-45)" text-anchor="end" font-family="Liberation Sans" font-size="8.5" fill="#666">3 PM</text>
<text transform="translate(240.8,616.6) rotate(-45)" text-anchor="end" font-family="Liberation Sans" font-size="8.5" fill="#666">4 PM</text>
<rect x="254.7" y="588.0" width="12" height="16.6" fill="#ffff00" stroke="#3a3a22" stroke-width="1"/>
<text transform="translate(263.0,616.6) rotate(-45)" text-anchor="end" font-family="Liberation Sans" font-size="8.5" fill="#666">5 PM</text>
<rect x="276.9" y="587.2" width="12" height="17.4" fill="#ffff00" stroke="#3a3a22" stroke-width="1"/>
<text transform="translate(285.2,616.6) rotate(-45)" text-anchor="end" font-family="Liberation Sans" font-size="8.5" fill="#666">6 PM</text>
<rect x="299.1" y="588.3" width="12" height="16.3" fill="#ffff00" stroke="#3a3a22" stroke-width="1"/>
<text transform="translate(307.4,616.6) rotate(-45)" text-anchor="end" font-family="Liberation Sans" font-size="8.5" fill="#666">7 PM</text>
<rect x="321.2" y="588.3" width="12" height="16.3" fill="#ffff00" stroke="#3a3a22" stroke-width="1"/>
<text transform="translate(329.5,616.6) rotate(-45)" text-anchor="end" font-family="Liberation Sans" font-size="8.5" fill="#666">8 PM</text>
<rect x="343.4" y="588.3" width="12" height="16.3" fill="#ffff00" stroke="#3a3a22" stroke-width="1"/>
<text transform="translate(351.7,616.6) rotate(-45)" text-anchor="end" font-family="Liberation Sans" font-size="8.5" fill="#666">9 PM</text>
<rect x="365.6" y="588.3" width="12" height="16.3" fill="#ffff00" stroke="#3a3a22" stroke-width="1"/>
<text transform="translate(373.9,616.6) rotate(-45)" text-anchor="end" font-family="Liberation Sans" font-size="8.5" fill="#666">10 PM</text>
<rect x="387.7" y="589.1" width="12" height="15.5" fill="#ffff00" stroke="#3a3a22" stroke-width="1"/>
<text transform="translate(396.0,616.6) rotate(-45)" text-anchor="end" font-family="Liberation Sans" font-size="8.5" fill="#666">11 PM</text>
<rect x="409.9" y="589.7" width="12" height="14.9" fill="#ffff00" stroke="#3a3a22" stroke-width="1"/>
<text transform="translate(418.2,616.6) rotate(-45)" text-anchor="end" font-family="Liberation Sans" font-size="8.5" fill="#666">2021 12 AM</text>
<rect x="432.1" y="592.2" width="12" height="12.4" fill="#00e400" stroke="#3a3a22" stroke-width="1"/>
<text transform="translate(440.4,616.6) rotate(-45)" text-anchor="end" font-family="Liberation Sans" font-size="8.5" fill="#666">1 AM</text>
<rect x="454.2" y="593.0" width="12" height="11.6" fill="#00e400" stroke="#3a3a22" stroke-width="1"/>
<text transform="translate(462.5,616.6) rotate(-45)" text-anchor="end" font-family="Liberation Sans" font-size="8.5" fill="#666">2 AM</text>
<rect x="476.4" y="593.0" width="12" height="11.6" fill="#00e400" stroke="#3a3a22" stroke-width="1"/>
<text transform="translate(484.7,616.6) rotate(-45)" text-anchor="end" font-family="Liberation Sans" font-size="8.5" fill="#666">3 AM</text>
<rect x="498.6" y="594.4" width="12" height="10.2" fill="#00e400" stroke="#3a3a22" stroke-width="1"/>
<text transform="translate(506.9,616.6) rotate(-45)" text-anchor="end" font-family="Liberation Sans" font-size="8.5" fill="#666">4 AM</text>
<rect x="520.7" y="594.9" width="12" height="9.7" fill="#00e400" stroke="#3a3a22" stroke-width="1"/>
<text transform="translate(529.0,616.6) rotate(-45)" text-anchor="end" font-family="Liberation Sans" font-size="8.5" fill="#666">5 AM</text>
<rect x="542.9" y="594.9" width="12" height="9.7" fill="#00e400" stroke="#3a3a22" stroke-width="1"/>
<text transform="translate(551.2,616.6) rotate(-45)" text-anchor="end" font-family="Liberation Sans" font-size="8.5" fill="#666">6 AM</text>
<rect x="565.1" y="596.6" width="12" height="8.0" fill="#00e400" stroke="#3a3a22" stroke-width="1"/>
<text transform="translate(573.4,616.6) rotate(-45)" text-anchor="end" font-family="Liberation Sans" font-size="8.5" fill="#666">7 AM</text>
<rect x="587.2" y="597.4" width="12" height="7.2" fill="#00e400" stroke="#3a3a22" stroke-width="1"/>
<text transform="translate(595.5,616.6) rotate(-45)" text-anchor="end" font-family="Liberation Sans" font-size="8.5" fill="#666">8 AM</text>
</svg>
<!-- current conditions -->
<div class="abs" style="left:623px;top:420px;width:187px;height:219px;border:1px solid #034a87;background:#eee"></div>
<div class="abs" style="left:623px;top:420px;width:187px;height:56px;background:#034a87"></div>
<div class="abs" style="left:623px;top:424px;width:187px;text-align:center;color:#fff;font-weight:bold;font-size:11.2px;line-height:16px">Current Conditions</div>
<div class="abs" style="left:623px;top:444px;width:187px;text-align:center;color:#fff;font-weight:bold;font-size:9px">observed at</div>
<div class="abs" style="left:623px;top:458px;width:187px;text-align:center;color:#fff;font-weight:bold;font-size:11.2px">Feb 25, 2021 8:00 AM (LT)</div>
<div class="abs" style="left:624px;top:476px;width:185px;height:85px;background:#00e400"></div>
<div class="abs" style="left:624px;top:488px;width:185px;text-align:center;font-weight:bold;font-size:14.8px;line-height:21px;color:#111">28 AQI<br>Good<br>PM2.5</div>
<div class="abs" style="left:624px;top:569px;width:185px;text-align:center;font-weight:bold;font-size:8.9px;color:#333">Health Message</div>
<div class="abs" style="left:628px;top:585px;width:180px;font-size:9px;line-height:16px;color:#333">The AQI value for your community is between 0 and 50. Air quality is satisfactory and poses little or no health risk.</div>
<div class="abs" style="left:623px;top:644px;font-size:8.2px;color:#666;white-space:nowrap">Note: Values above 500 are considered Beyond the</div>
</body></html>
